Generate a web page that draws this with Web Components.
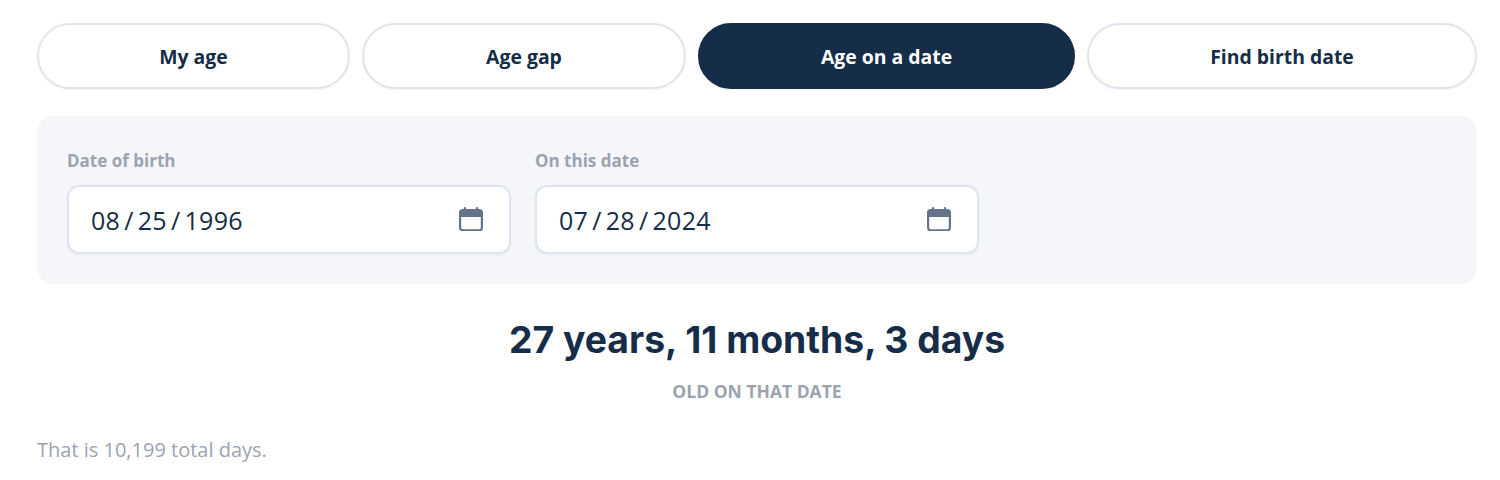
<!DOCTYPE html>
<html lang="en">
<head>
<meta charset="utf-8">
<title>Age calculator</title>
<style>
  html, body { margin: 0; background: #fff; }
  body { font-family: "Open Sans", Roboto, sans-serif; color: #152d48; }
</style>
</head>
<body>
<age-calculator>
  <mode-tabs slot="tabs">
    <mode-tab>My age</mode-tab>
    <mode-tab>Age gap</mode-tab>
    <mode-tab active>Age on a date</mode-tab>
    <mode-tab>Find birth date</mode-tab>
  </mode-tabs>
  <date-panel slot="panel">
    <date-field label="Date of birth" value="08 / 25 / 1996"></date-field>
    <date-field label="On this date" value="07 / 28 / 2024"></date-field>
  </date-panel>
  <age-result slot="result" caption="OLD ON THAT DATE">27 years, 11 months, 3 days</age-result>
  <span slot="note">That is 10,199 total days.</span>
</age-calculator>

<script>
class AgeCalculator extends HTMLElement {
  constructor() {
    super();
    this.attachShadow({ mode: "open" });
  }

  connectedCallback() {
    this.shadowRoot.innerHTML = /* html */`
    <style>
      :host {
        display: flex;
        flex-direction: column;
        width: 1440px;
        padding: 23px 0 0 37px;
      }
      .note {
        font-size: 20px;
        line-height: 28px;
        color: #9ca3af;
        margin-top: 33px;
      }
    </style>
    <slot name="tabs"></slot>
    <slot name="panel"></slot>
    <slot name="result"></slot>
    <div class="note"><slot name="note"></slot></div>`;
  }
}

class ModeTabs extends HTMLElement {
  constructor() {
    super();
    this.attachShadow({ mode: "open" });
  }

  connectedCallback() {
    this.shadowRoot.innerHTML = /* html */`
    <style>
      :host {
        display: grid;
        grid-template-columns: 313px 324px 377px 390px;
        gap: 12px;
      }
    </style>
    <slot></slot>`;
  }
}

class ModeTab extends HTMLElement {
  constructor() {
    super();
    this.attachShadow({ mode: "open" });
  }

  connectedCallback() {
    this.shadowRoot.innerHTML = /* html */`
    <style>
      :host {
        display: flex;
        align-items: center;
        justify-content: center;
        box-sizing: border-box;
        height: 66px;
        border: 2px solid #e0e5ec;
        border-radius: 33px;
        background: #fff;
        color: #152d48;
        font-size: 19.4px;
        font-weight: 700;
        box-shadow: 0 1px 2px rgba(0, 0, 0, 0.05);
      }
      :host([active]) {
        background: #152d48;
        border-color: #152d48;
        color: #fff;
      }
    </style>
    <slot></slot>`;
  }
}

class DatePanel extends HTMLElement {
  constructor() {
    super();
    this.attachShadow({ mode: "open" });
  }

  connectedCallback() {
    this.shadowRoot.innerHTML = /* html */`
    <style>
      :host {
        display: grid;
        grid-template-columns: repeat(3, 444px);
        gap: 24px;
        height: 168px;
        box-sizing: border-box;
        margin-top: 27px;
        padding: 30px;
        background: #f4f6fa;
        border-radius: 16px;
      }
    </style>
    <slot></slot>`;
  }
}

class DateField extends HTMLElement {
  constructor() {
    super();
    this.attachShadow({ mode: "open" });
  }

  connectedCallback() {
    this.shadowRoot.innerHTML = /* html */`
    <style>
      :host {
        display: flex;
        flex-direction: column;
        gap: 9px;
      }
      .label {
        font-size: 17px;
        line-height: 30px;
        height: 30px;
        font-weight: 700;
        color: #9ca3af;
      }
      .box {
        display: flex;
        align-items: center;
        justify-content: space-between;
        box-sizing: border-box;
        height: 69px;
        padding: 0 26px 0 22px;
        background: #fff;
        border: 2px solid #dfe5ec;
        border-radius: 12px;
        box-shadow: 0 1px 2px rgba(0, 0, 0, 0.05);
        font-size: 25px;
        letter-spacing: 0.3px;
        word-spacing: -2.75px;
        color: #152d48;
      }
      svg { display: block; width: 24px; height: 24px; margin-top: -1px; }
    </style>
    <div class="label">${this.getAttribute("label")}</div>
    <div class="box">
      <span>${this.getAttribute("value")}</span>
      <svg viewBox="0 0 24 24" fill="none">
        <path d="M6 1.2v3M18 1.2v3" stroke="#64748b" stroke-width="2.2" stroke-linecap="round"/>
        <path d="M3 3h18a3 3 0 0 1 3 3v4H0V6a3 3 0 0 1 3-3z" fill="#64748b"/>
        <rect x="1.1" y="3.1" width="21.8" height="20.3" rx="3" stroke="#64748b" stroke-width="2.2"/>
      </svg>
    </div>`;
  }
}

class AgeResult extends HTMLElement {
  constructor() {
    super();
    this.attachShadow({ mode: "open" });
  }

  connectedCallback() {
    this.shadowRoot.innerHTML = /* html */`
    <style>
      :host {
        display: flex;
        flex-direction: column;
        align-items: center;
        margin-top: 32px;
      }
      .value {
        font-family: Inter, sans-serif;
        font-size: 37.3px;
        line-height: 48px;
        font-weight: 700;
        color: #152d48;
      }
      .caption {
        margin-top: 15px;
        font-size: 17.5px;
        line-height: 24px;
        font-weight: 700;
        color: #9ca3af;
      }
    </style>
    <div class="value"><slot></slot></div>
    <div class="caption">${this.getAttribute("caption")}</div>`;
  }
}

customElements.define("age-calculator", AgeCalculator);
customElements.define("mode-tabs", ModeTabs);
customElements.define("mode-tab", ModeTab);
customElements.define("date-panel", DatePanel);
customElements.define("date-field", DateField);
customElements.define("age-result", AgeResult);
</script>
</body>
</html>
